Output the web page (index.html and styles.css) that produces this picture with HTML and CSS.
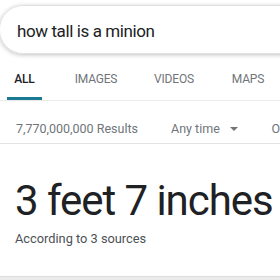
FILE: index.html
```html
<!DOCTYPE html>
<html>
<head>
<meta charset="utf-8">
<link rel="stylesheet" href="styles.css">
</head>
<body>
<div class="page">
  <div class="search-wrap">
    <div class="search">how tall is a minion</div>
  </div>
  <nav class="tabs">
    <div class="tab active">ALL</div>
    <div class="tab">IMAGES</div>
    <div class="tab">VIDEOS</div>
    <div class="tab">MAPS</div>
  </nav>
  <div class="tools">
    <span class="count">7,770,000,000 Results</span>
    <span class="time">Any time <span class="caret"></span></span>
    <span class="more">O</span>
  </div>
  <div class="answer">
    <div class="big">3 feet 7 inches</div>
    <div class="src">According to 3 sources</div>
  </div>
  <div class="footer"></div>
</div>
</body>
</html>
```
FILE: styles.css
```css
html, body {
  margin: 0;
  padding: 0;
  background: #fff;
  overflow: hidden;
}
.page {
  width: 280px;
  height: 280px;
  font-family: Roboto, "Liberation Sans", sans-serif;
  display: flex;
  flex-direction: column;
  overflow: hidden;
}
.search-wrap {
  padding-top: 5px;
  height: 55px;
  box-sizing: border-box;
}
.search {
  width: 320px;
  height: 49px;
  margin-left: -1px;
  box-sizing: border-box;
  border: 1px solid #dfe1e5;
  border-radius: 24px;
  box-shadow: 0 1px 4px rgba(32,33,36,0.28);
  font-size: 17px;
  letter-spacing: -0.4px;
  color: #202124;
  padding-left: 17px;
  padding-top: 3px;
  display: flex;
  align-items: center;
  white-space: nowrap;
}
.tabs {
  display: flex;
  height: 46px;
  box-sizing: border-box;
  border-bottom: 1px solid #ebebeb;
  padding-left: 7px;
}
.tab {
  font-size: 12px;
  letter-spacing: -0.2px;
  color: #70757a;
  display: flex;
  align-items: center;
  justify-content: center;
  padding-top: 2px;
  box-sizing: border-box;
  white-space: nowrap;
}
.tab:nth-child(1) { width: 35px; }
.tab:nth-child(2) { width: 68px; margin-left: 20px; }
.tab:nth-child(3) { width: 60px; margin-left: 14px; }
.tab:nth-child(4) { width: 50px; margin-left: 19px; }
.tab.active {
  color: #202124;
  font-weight: 500;
  border-bottom: 3px solid #1a7a94;
  padding-top: 5px;
}
.tools {
  height: 43px;
  box-sizing: border-box;
  border-bottom: 1px solid #e3e3e3;
  display: flex;
  align-items: center;
  padding-left: 16px;
  padding-top: 13px;
  font-size: 12.5px;
  color: #70757a;
  white-space: nowrap;
}
.count { width: 156px; }
.time { display: flex; align-items: center; width: 101px; }
.caret {
  display: inline-block;
  margin-left: 10px;
  border-left: 4px solid transparent;
  border-right: 4px solid transparent;
  border-top: 4px solid #70757a;
}
.answer {
  flex: 1;
  padding-left: 15px;
  padding-top: 33px;
  box-sizing: border-box;
}
.big {
  font-size: 42px;
  letter-spacing: -1.05px;
  line-height: 48px;
  color: #202124;
  white-space: nowrap;
}
.src {
  font-size: 12.8px;
  color: #4d5156;
  margin-top: 6px;
}
.footer {
  height: 3px;
  background: #ebebeb;
  border-top: 1px solid #dadce0;
}
```
